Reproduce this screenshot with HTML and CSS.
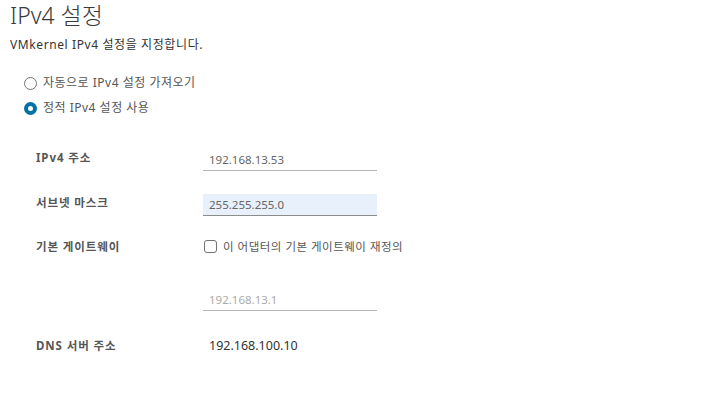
FILE: index.html
```html
<!DOCTYPE html>
<html lang="ko">
<head>
<meta charset="utf-8">
<link rel="stylesheet" href="styles.css">
</head>
<body>
<div class="page">
  <h1 class="title">IPv4 설정</h1>
  <p class="subtitle">VMkernel IPv4 설정을 지정합니다.</p>
  <div class="radios">
    <label class="radio"><span class="rbox"></span>자동으로 IPv4 설정 가져오기</label>
    <label class="radio"><span class="rbox checked"></span>정적 IPv4 설정 사용</label>
  </div>
  <div class="form">
    <div class="row">
      <div class="label">IPv4 주소</div>
      <div class="field"><div class="input">192.168.13.53</div></div>
    </div>
    <div class="row short">
      <div class="label">서브넷 마스크</div>
      <div class="field"><div class="input focus">255.255.255.0</div></div>
    </div>
    <div class="row">
      <div class="label">기본 게이트웨이</div>
      <div class="field"><label class="check"><span class="cbox"></span>이 어댑터의 기본 게이트웨이 재정의</label></div>
    </div>
    <div class="row gw">
      <div class="label"></div>
      <div class="field"><div class="input placeholder">192.168.13.1</div></div>
    </div>
    <div class="row last">
      <div class="label">DNS 서버 주소</div>
      <div class="field"><div class="value">192.168.100.10</div></div>
    </div>
  </div>
</div>
</body>
</html>
```
FILE: styles.css
```css
* { box-sizing: border-box; }
body {
  margin: 0;
  background: #fff;
  font-family: "Noto Sans", "Noto Sans CJK KR", sans-serif;
  color: #565656;
}
.page { padding: 0 0 0 10px; }
.title {
  margin: 0;
  font-size: 23px;
  font-weight: 300;
  line-height: 30px;
  color: #3a3a3a;
}
.subtitle {
  margin: 7px 0 0;
  font-size: 12px;
  letter-spacing: 0.6px;
  line-height: 16px;
  color: #333;
}
.radios {
  margin-top: 21px;
  padding-left: 14px;
  display: flex;
  flex-direction: column;
  gap: 7px;
}
.radio {
  display: flex;
  align-items: center;
  gap: 6px;
  font-size: 12px;
  letter-spacing: 0.5px;
  line-height: 18px;
  color: #565656;
}
.rbox {
  width: 13px;
  height: 13px;
  border: 1px solid #737373;
  border-radius: 50%;
  background: #fff;
  flex: none;
}
.rbox.checked {
  border: 4px solid #0072a3;
  background: #fff;
}
.form {
  margin-top: 17px;
  padding-left: 26px;
  display: flex;
  flex-direction: column;
}
.row {
  display: grid;
  grid-template-columns: 167px 174px;
  align-items: center;
  height: 46px;
}
.row.short { height: 43px; }
.row.gw { height: 56px; }
.row.last { height: 40px; }
.label {
  font-size: 11.5px;
  font-weight: 700;
  letter-spacing: 0.9px;
  color: #565656;
  white-space: nowrap;
}
.input {
  height: 22px;
  border-bottom: 1px solid #b3b3b3;
  padding: 0 6px;
  font-size: 11.5px;
  line-height: 21px;
  color: #666;
  margin-top: 6px;
}
.input.focus {
  background: #e8f0fb;
  border-bottom-color: #8c8c8c;
}
.input.placeholder { color: #aaa; }
.check {
  display: flex;
  align-items: center;
  gap: 6px;
  font-size: 11.5px;
  letter-spacing: 0.5px;
  color: #565656;
  padding-left: 1px;
  white-space: nowrap;
}
.cbox {
  width: 13px;
  height: 13px;
  border: 1px solid #737373;
  border-radius: 3px;
  flex: none;
}
.value {
  padding-left: 6px;
  font-size: 12.5px;
  color: #333;
}
```
